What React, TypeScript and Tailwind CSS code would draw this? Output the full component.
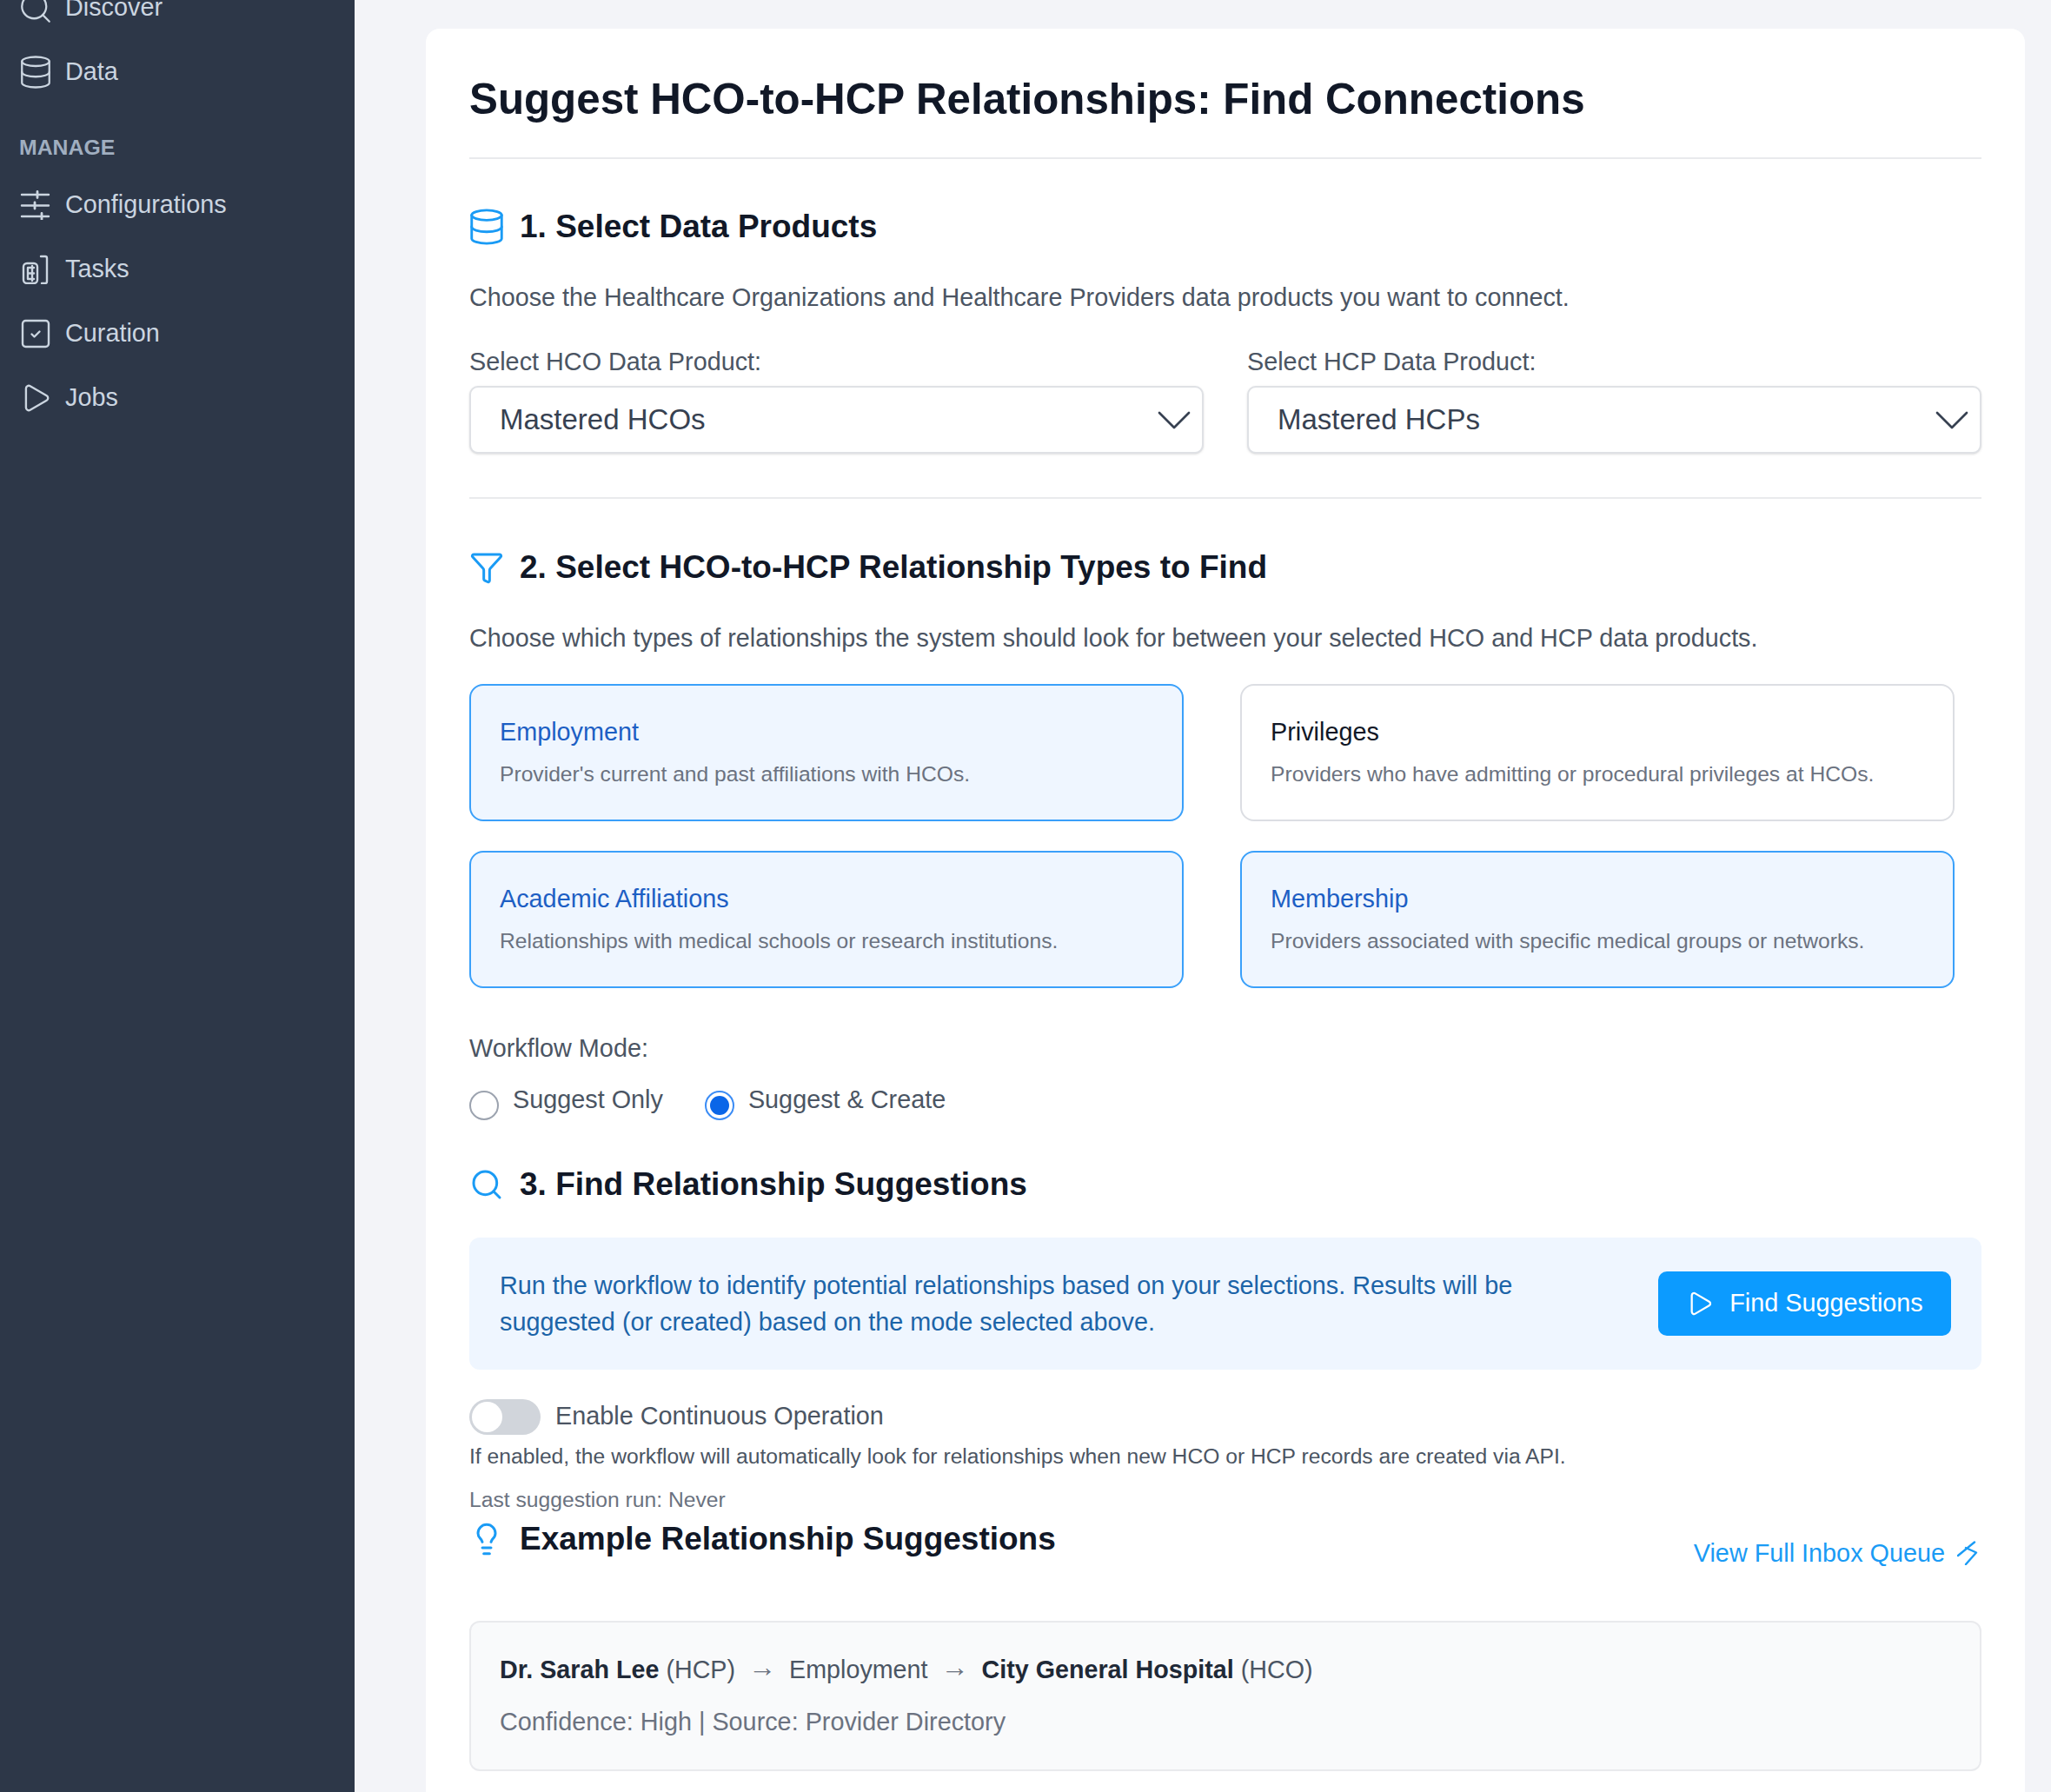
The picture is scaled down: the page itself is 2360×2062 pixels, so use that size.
import React from "react";
import { Database, Search, Play, Filter, Lightbulb } from "lucide-react";

function TasksIcon() {
  return (
    <svg className="shrink-0" width="34" height="34" viewBox="0 0 34 34" fill="none" stroke="currentColor" strokeWidth="2.4" strokeLinecap="round" strokeLinejoin="round">
      <rect x="3" y="10" width="16" height="23" rx="4" />
      <path d="M8 15v13M8 15h7M8 21.500h7M8 28h7M13 13v17" />
      <path d="M23 2h5a2 2 0 0 1 2 2v27a2 2 0 0 1-2 2h-4" />
    </svg>
  );
}

function SlidersIcon() {
  return (
    <svg className="shrink-0" width="36" height="34" viewBox="0 0 36 34" fill="none" stroke="currentColor" strokeWidth="2.4" strokeLinecap="round">
      <path d="M2 5h31M2 17.500h31M2 30h31" />
      <path d="M20 1.500v7M17 14v7M25 26.500v7" strokeWidth="2.800" />
    </svg>
  );
}

function CurationIcon() {
  return (
    <svg className="shrink-0" width="34" height="34" viewBox="0 0 34 34" fill="none" stroke="currentColor" strokeWidth="2.4" strokeLinecap="round" strokeLinejoin="round">
      <rect x="2" y="2" width="30" height="30" rx="3.500" />
      <path d="M12.500 17.500 15.500 20.500 21.500 14.500" />
    </svg>
  );
}

function LinkIcon() {
  return (
    <svg className="shrink-0" width="24" height="28" viewBox="0 0 24 28" fill="none" stroke="currentColor" strokeWidth="2.400" strokeLinecap="round" strokeLinejoin="round">
      <path d="M20 1.500 1 17M10 8l12 5.500L10 27" />
    </svg>
  );
}

function Chevron() {
  return (
    <svg className="shrink-0" width="38" height="22" viewBox="0 0 38 22" fill="none" stroke="#374151" strokeWidth="2.700" strokeLinecap="round" strokeLinejoin="round">
      <path d="M2 3 19 20 36 3" />
    </svg>
  );
}

function NavItem({ icon, label }: { icon: React.ReactNode; label: string }) {
  return (
    <div className="flex h-[74px] items-center gap-[18px] pl-[24px] text-[28.8px] text-[#cbd5e0]">
      <span className="flex h-[33px] w-[33px] items-center justify-center">{icon}</span>
      <span>{label}</span>
    </div>
  );
}

function SectionHeading({ icon, children }: { icon: React.ReactNode; children: React.ReactNode }) {
  return (
    <div className="flex h-[44px] items-center gap-[18px]">
      <span className="flex h-[40px] w-[40px] items-center justify-center text-[#1a9bf5]">{icon}</span>
      <h2 className="text-[37px] font-bold leading-[44px] text-[#111827]">{children}</h2>
    </div>
  );
}

function SelectBox({ label, value }: { label: string; value: string }) {
  return (
    <div className="flex flex-col">
      <div className="text-[28.8px] leading-[36px] text-[#4b5563]">{label}</div>
      <div className="mt-[10px] flex h-[78px] items-center justify-between rounded-[10px] border-2 border-[#dfe1e5] bg-white pl-[33px] pr-[13px] text-[33px] text-[#374151] shadow-sm">
        <span>{value}</span>
        <Chevron />
      </div>
    </div>
  );
}

function TypeCard({ title, text, active }: { title: string; text: string; active?: boolean }) {
  return (
    <div
      className={
        active
          ? "flex h-[158px] flex-col justify-center rounded-[16px] border-2 border-[#3aa0fa] bg-[#eff6ff] px-[33px]"
          : "flex h-[158px] flex-col justify-center rounded-[16px] border-2 border-[#dcdee3] bg-white px-[33px]"
      }
    >
      <div className={active ? "text-[28.8px] leading-[36px] text-[#1d5fc4]" : "text-[28.8px] leading-[36px] text-[#111827]"}>{title}</div>
      <div className="mt-[13px] text-[24.65px] leading-[36px] text-[#6b7280]">{text}</div>
    </div>
  );
}

function Arrow() {
  return <span className="mx-[15px] mb-[7px] text-[32px] leading-[32px] text-[#6b7280]">→</span>;
}

export default function App() {
  return (
    <div className="flex h-[2062px] w-[2360px] overflow-hidden bg-[#f3f4f8] font-['Liberation_Sans',Arial,sans-serif]">
      <aside className="h-full w-[408px] shrink-0 bg-[#2d3748]">
        <div className="-mt-[28px]">
          <NavItem icon={<Search className="shrink-0" size={42} strokeWidth={1.3} />} label="Discover" />
          <NavItem icon={<Database className="shrink-0" size={42} strokeWidth={1.3} />} label="Data" />
        </div>
        <div className="mt-[35px] pl-[22px] text-[24.8px] font-bold leading-[30px] text-[#a0aec0]">MANAGE</div>
        <div className="mt-[14px]">
          <NavItem icon={<SlidersIcon />} label="Configurations" />
          <NavItem icon={<TasksIcon />} label="Tasks" />
          <NavItem icon={<CurationIcon />} label="Curation" />
          <NavItem icon={<Play className="shrink-0" size={38} strokeWidth={1.5} />} label="Jobs" />
        </div>
      </aside>

      <main className="pl-[82px] pt-[33px]">
        <div className="min-h-[2100px] w-[1840px] rounded-[16px] bg-white px-[50px] pt-[50px]">
          <div className="border-b-2 border-[#e9eaed] pb-[36px]">
            <h1 className="text-[49.3px] font-bold leading-[62px] text-[#111827]">Suggest HCO-to-HCP Relationships: Find Connections</h1>
          </div>

          <div className="mt-[56px]">
            <SectionHeading icon={<Database className="shrink-0" size={46} strokeWidth={1.5} />}>1. Select Data Products</SectionHeading>
          </div>
          <p className="mt-[39px] text-[28.76px] leading-[40px] text-[#4b5563]">
            Choose the Healthcare Organizations and Healthcare Providers data products you want to connect.
          </p>
          <div className="mt-[36px] grid grid-cols-2 gap-[50px]">
            <SelectBox label="Select HCO Data Product:" value="Mastered HCOs" />
            <SelectBox label="Select HCP Data Product:" value="Mastered HCPs" />
          </div>
          <div className="mt-[50px] border-b-2 border-[#e9eaed]" />

          <div className="mt-[57px]">
            <SectionHeading icon={<Filter className="shrink-0" size={40} strokeWidth={1.8} />}>2. Select HCO-to-HCP Relationship Types to Find</SectionHeading>
          </div>
          <p className="mt-[39px] text-[28.76px] leading-[40px] text-[#4b5563]">
            Choose which types of relationships the system should look for between your selected HCO and HCP data products.
          </p>
          <div className="mt-[33px] grid w-[1709px] grid-cols-2 gap-x-[65px] gap-y-[34px]">
            <TypeCard active title="Employment" text="Provider's current and past affiliations with HCOs." />
            <TypeCard title="Privileges" text="Providers who have admitting or procedural privileges at HCOs." />
            <TypeCard active title="Academic Affiliations" text="Relationships with medical schools or research institutions." />
            <TypeCard active title="Membership" text="Providers associated with specific medical groups or networks." />
          </div>

          <div className="mt-[51px] text-[28.8px] leading-[36px] text-[#4b5563]">Workflow Mode:</div>
          <div className="mt-[23px] flex items-start text-[28.8px] leading-[36px] text-[#4b5563]">
            <span className="mt-[8px] h-[34px] w-[34px] rounded-full border-2 border-[#9ca3af] bg-white" />
            <span className="ml-[16px]">Suggest Only</span>
            <span className="ml-[48px] mt-[8px] flex h-[34px] w-[34px] items-center justify-center rounded-full border-2 border-[#3b8cf5] bg-white">
              <span className="h-[22px] w-[22px] rounded-full bg-[#0a66e8]" />
            </span>
            <span className="ml-[16px]">Suggest &amp; Create</span>
          </div>

          <div className="mt-[52px]">
            <SectionHeading icon={<Search className="shrink-0" size={40} strokeWidth={1.8} />}>3. Find Relationship Suggestions</SectionHeading>
          </div>
          <div className="mt-[39px] flex h-[152px] items-center justify-between rounded-[12px] bg-[#eff6ff] pl-[35px] pr-[35px]">
            <p className="w-[1260px] text-[28.8px] leading-[42px] text-[#1c64a8]">
              Run the workflow to identify potential relationships based on your selections. Results will be suggested (or created) based on the mode selected above.
            </p>
            <button className="flex h-[74px] w-[337px] items-center justify-center gap-[18px] rounded-[10px] bg-[#0c9bff] text-[28.8px] text-white">
              <Play className="shrink-0" size={32} strokeWidth={1.7} />
              <span>Find Suggestions</span>
            </button>
          </div>

          <div className="mt-[34px] flex items-center gap-[17px]">
            <div className="flex h-[41px] w-[82px] items-center rounded-full bg-[#d1d5db] pl-[3px]">
              <div className="h-[35px] w-[35px] rounded-full bg-white" />
            </div>
            <span className="mb-[3px] text-[28.8px] leading-[36px] text-[#4b5563]">Enable Continuous Operation</span>
          </div>
          <p className="mt-[9px] text-[24.67px] leading-[32px] text-[#4b5563]">
            If enabled, the workflow will automatically look for relationships when new HCO or HCP records are created via API.
          </p>
          <p className="mt-[18px] text-[24.67px] leading-[32px] text-[#6b7280]">Last suggestion run: Never</p>

          <div className="mt-[7px] flex items-start justify-between">
            <SectionHeading icon={<Lightbulb className="shrink-0" size={40} strokeWidth={1.8} />}>Example Relationship Suggestions</SectionHeading>
            <a className="mr-[4px] mt-[20px] flex items-center gap-[14px] text-[28.8px] leading-[36px] text-[#1a9bf5]">
              <span>View Full Inbox Queue</span>
              <LinkIcon />
            </a>
          </div>

          <div className="mt-[60px] h-[173px] rounded-[12px] border-2 border-[#e9eaed] bg-[#f9fafb] px-[33px] pt-[34px]">
            <div className="flex items-center text-[28.7px] leading-[40px] text-[#4b5563]">
              <span className="font-bold text-[#1f2937]">Dr. Sarah Lee</span>
              <span className="ml-[8px]">(HCP)</span>
              <Arrow />
              <span>Employment</span>
              <Arrow />
              <span className="font-bold text-[#1f2937]">City General Hospital</span>
              <span className="ml-[8px]">(HCO)</span>
            </div>
            <div className="mt-[20px] text-[28.8px] leading-[40px] text-[#6b7280]">Confidence: High | Source: Provider Directory</div>
          </div>
        </div>
      </main>
    </div>
  );
}
